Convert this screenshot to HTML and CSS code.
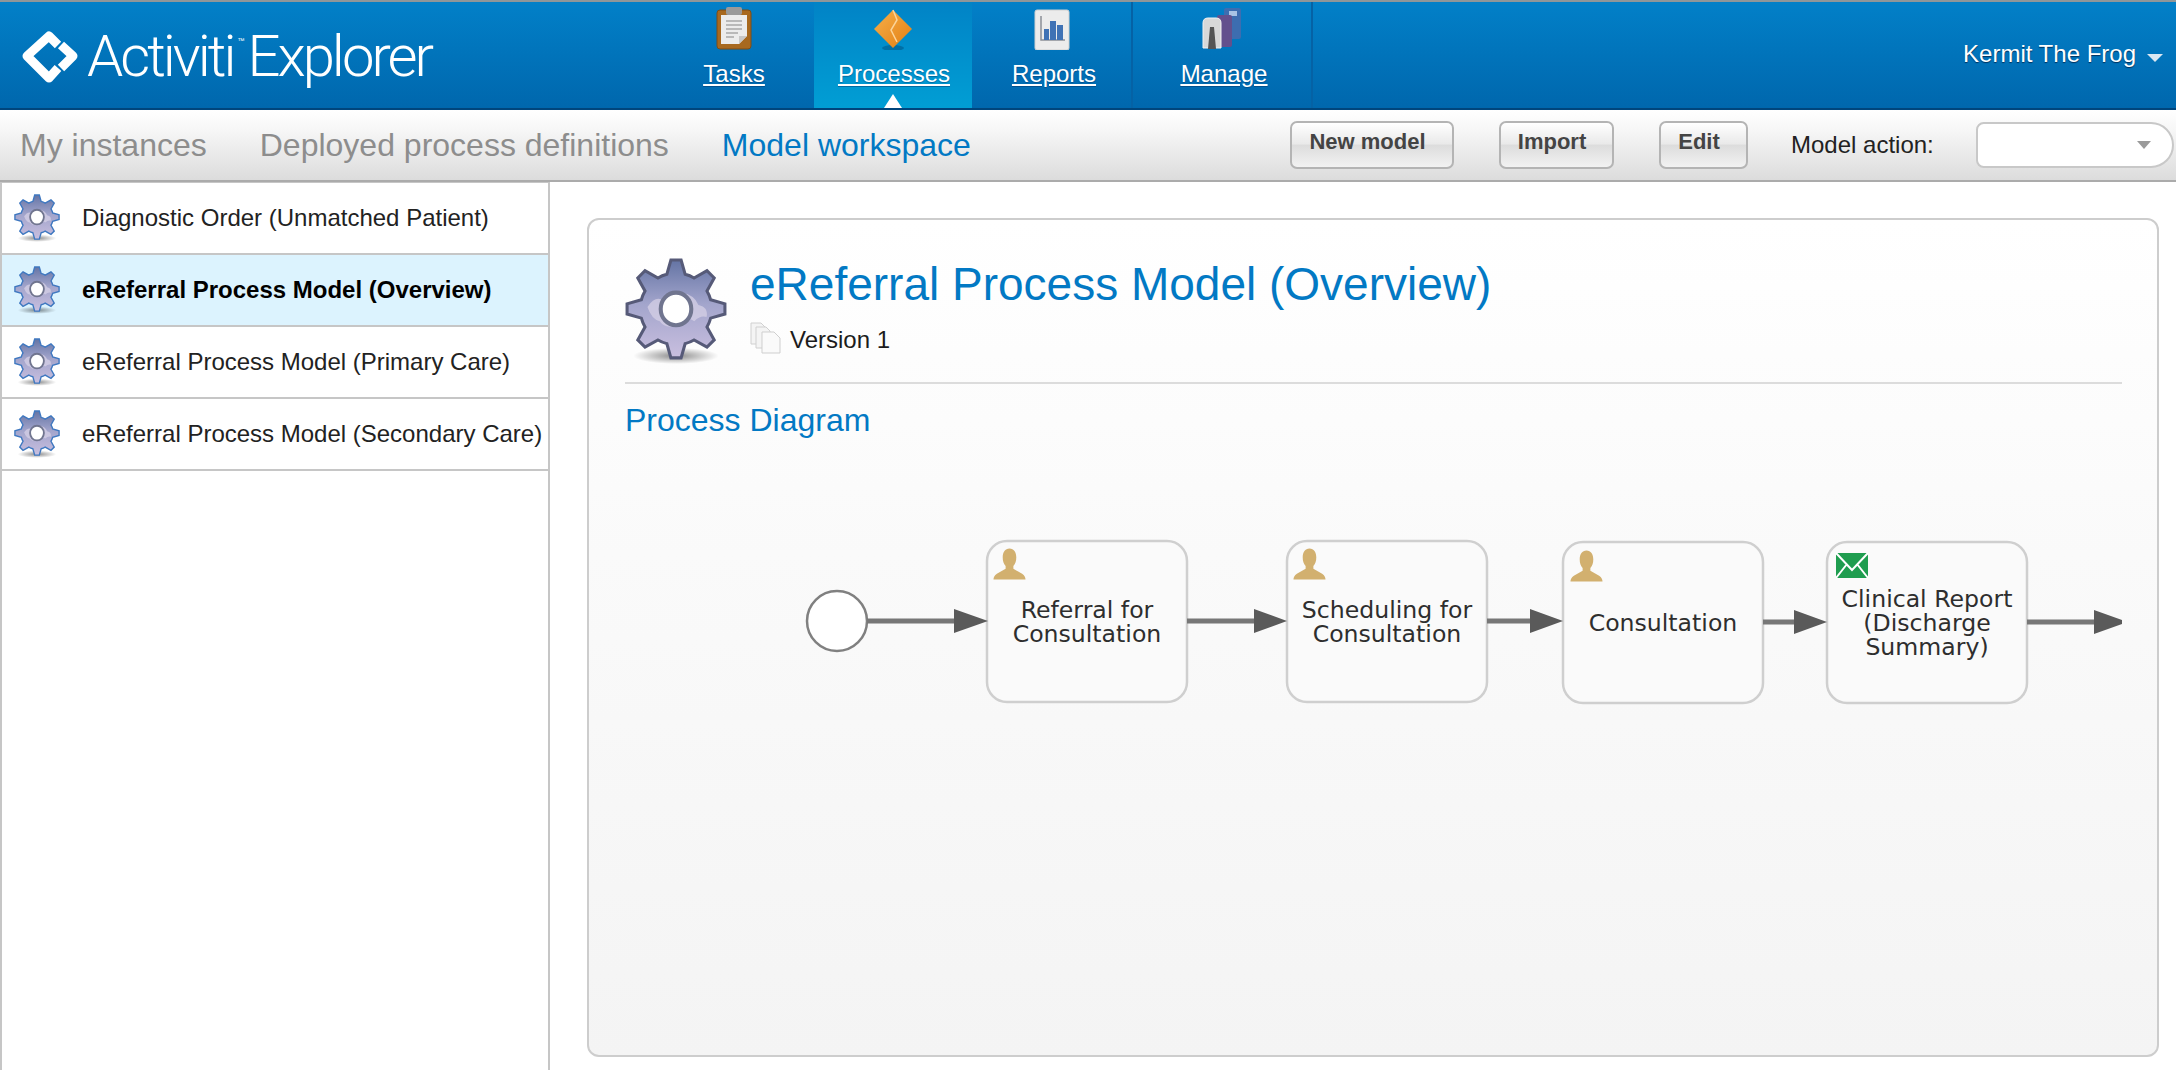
FILE: index.html
```html
<!DOCTYPE html>
<html lang="en">
<head>
<meta charset="utf-8">
<title>Activiti Explorer</title>
<link rel="stylesheet" href="styles.css">
</head>
<body>
<svg class="defs" width="0" height="0" aria-hidden="true">
  <defs>
    <linearGradient id="gearFill" x1="0" y1="0" x2="0" y2="1">
      <stop offset="0" stop-color="#6474a4"/>
      <stop offset=".45" stop-color="#a3a5cc"/>
      <stop offset="1" stop-color="#c9bfdf"/>
    </linearGradient>
    <radialGradient id="gearShadow" cx=".5" cy=".5" r=".5">
      <stop offset="0" stop-color="#000" stop-opacity=".45"/>
      <stop offset="1" stop-color="#000" stop-opacity="0"/>
    </radialGradient>
    <linearGradient id="diamondFill" x1="0" y1="0" x2="1" y2="1">
      <stop offset="0" stop-color="#f6b04a"/>
      <stop offset="1" stop-color="#e37f14"/>
    </linearGradient>
    <symbol id="gear" viewBox="0 0 100 104">
      <ellipse cx="50" cy="96" rx="42" ry="8" fill="url(#gearShadow)"/>
      <path class="gear-body" fill="url(#gearFill)" d="M41 16L45 2H55L59 16A35 35 0 0 1 67.68 19.6L80.4 12.52L87.48 19.6L80.4 32.32A35 35 0 0 1 84 41L98 45V55L84 59A35 35 0 0 1 80.4 67.68L87.48 80.4L80.4 87.48L67.68 80.4A35 35 0 0 1 59 84L55 98H45L41 84A35 35 0 0 1 32.32 80.4L19.6 87.48L12.52 80.4L19.6 67.68A35 35 0 0 1 16 59L2 55V45L16 41A35 35 0 0 1 19.6 32.32L12.52 19.6L19.6 12.52L32.32 19.6A35 35 0 0 1 41 16Z"/>
      <path fill="#d6d0e6" opacity=".75" d="M22 48Q30 36 38 42Q44 30 56 34Q68 36 72 46Q82 48 80 58Q74 56 68 62Q60 56 50 66Q40 70 34 62Q26 60 22 48Z"/>
      <ellipse cx="50" cy="50" rx="15" ry="16" fill="#fff" stroke="#70758f" stroke-width="4"/>
    </symbol>
    <symbol id="person" viewBox="0 0 34 34">
      <path fill="#d2b06f" d="M17 1c4.500 0 7 4 7 9 0 4-1 7-3 9v3l9 5c2.500 1.500 3.500 4 3.500 6H.5c0-2 1-4.500 3.500-6l9-5v-3c-2-2-3-5-3-9 0-5 2.500-9 7-9z"/>
    </symbol>
  </defs>
</svg>

<header class="topbar">
  <div class="logo">
    <svg class="logo-mark" viewBox="0 0 60 60" width="60" height="60" aria-hidden="true">
      <path d="M38 19L29 10L7 30L29 52L38 42" fill="none" stroke="#fff" stroke-width="9" stroke-linejoin="round" stroke-linecap="butt"/>
      <path d="M41 19L53 30L41 42" fill="none" stroke="#fff" stroke-width="9" stroke-linejoin="round"/>
    </svg>
    <span class="logo-text">Activiti</span><span class="logo-tm">™</span><span class="logo-text">Explorer</span>
  </div>
  <nav class="mainnav">
    <a class="navitem nav-tasks" href="#">
      <svg class="navicon" viewBox="0 0 36 44" width="36" height="44" aria-hidden="true">
        <rect x="1" y="4" width="34" height="39" rx="3" fill="#a8691f" stroke="#7d4d16"/>
        <path d="M5 9H31V30L23 38H5Z" fill="#ececec"/>
        <path d="M23 38V30H31Z" fill="#c8c8c8"/>
        <rect x="10" y="1" width="16" height="8" rx="2" fill="#9a9a9a"/>
        <path d="M10 15H26M10 19H26M10 23H26M10 27H22M10 31H18" stroke="#a8a8a8" stroke-width="1.500"/>
      </svg>
      <span class="navlabel">Tasks</span>
    </a>
    <a class="navitem nav-active nav-processes" href="#">
      <svg class="navicon" viewBox="0 0 40 44" width="40" height="44" aria-hidden="true">
        <ellipse cx="20" cy="42" rx="11" ry="3" fill="#00507f" opacity=".5"/>
        <path d="M20 4L39 23L20 42L1 23Z" fill="url(#diamondFill)"/>
        <path d="M20 4L24 14L18 24L24 36" fill="none" stroke="#fbd49a" stroke-width="1.500"/>
      </svg>
      <span class="navlabel">Processes</span>
      <span class="nav-caret"></span>
    </a>
    <a class="navitem nav-reports" href="#">
      <svg class="navicon" viewBox="0 0 36 44" width="36" height="44" aria-hidden="true">
        <rect x="1" y="4" width="34" height="40" rx="2" fill="#ececec" stroke="#d0d0d0"/>
        <path d="M7 10V34H31" fill="none" stroke="#8a8f96" stroke-width="1.500"/>
        <rect x="10" y="23" width="5" height="11" fill="#3f72b5"/>
        <rect x="16" y="15" width="6" height="19" fill="#3f72b5"/>
        <rect x="23" y="19" width="6" height="15" fill="#3f72b5"/>
      </svg>
      <span class="navlabel">Reports</span>
    </a>
    <a class="navitem nav-manage" href="#">
      <svg class="navicon" viewBox="0 0 40 44" width="40" height="44" aria-hidden="true">
        <rect x="22" y="2" width="17" height="31" rx="2" fill="#3d6db0"/>
        <rect x="27" y="5" width="8" height="5" fill="#a9c3e4"/>
        <rect x="15" y="9" width="15" height="32" rx="2" fill="#63508d"/>
        <path d="M1 17Q1 12 6 12H14Q19 12 19 17V42H1Z" fill="#d8d8d8" stroke="#f2f2f2"/>
        <path d="M8 21H12L14 43H6Z" fill="#555"/>
      </svg>
      <span class="navlabel">Manage</span>
    </a>
  </nav>
  <div class="user">Kermit The Frog<span class="user-caret"></span></div>
</header>

<div class="subbar">
  <a class="tab" href="#">My instances</a>
  <a class="tab" href="#">Deployed process definitions</a>
  <a class="tab tab-active" href="#">Model workspace</a>
  <div class="actions">
    <button class="btn btn-new" type="button">New model</button>
    <button class="btn btn-import" type="button">Import</button>
    <button class="btn btn-edit" type="button">Edit</button>
    <span class="action-label">Model action:</span>
    <div class="select"><span class="select-caret"></span></div>
  </div>
</div>

<div class="workspace">
  <aside class="sidebar">
    <div class="row"><svg class="row-gear" aria-hidden="true"><use href="#gear"/></svg><span>Diagnostic Order (Unmatched Patient)</span></div>
    <div class="row row-selected"><svg class="row-gear" aria-hidden="true"><use href="#gear"/></svg><span>eReferral Process Model (Overview)</span></div>
    <div class="row"><svg class="row-gear" aria-hidden="true"><use href="#gear"/></svg><span>eReferral Process Model (Primary Care)</span></div>
    <div class="row"><svg class="row-gear" aria-hidden="true"><use href="#gear"/></svg><span>eReferral Process Model (Secondary Care)</span></div>
  </aside>

  <main class="main">
    <section class="card">
      <div class="card-head">
        <svg class="head-gear" aria-hidden="true"><use href="#gear"/></svg>
        <div class="head-text">
          <h1 class="title">eReferral Process Model (Overview)</h1>
          <div class="version">
            <svg class="version-icon" viewBox="0 0 32 32" width="32" height="32" aria-hidden="true">
              <path d="M1 1H11L15 5V22H1Z" fill="#f4f4f4" stroke="#d0d0d0"/>
              <path d="M6 5H16L20 9V26H6Z" fill="#f4f4f4" stroke="#d0d0d0"/>
              <path d="M12 10H24L30 16V31H12Z" fill="#fafafa" stroke="#cfcfcf"/>
            </svg>
            <span class="version-text">Version 1</span>
          </div>
        </div>
      </div>
      <h2 class="section">Process Diagram</h2>
      <svg class="diagram" viewBox="625 440 1497 600" width="1497" height="600" role="img" aria-label="Process diagram">
        <circle class="start" cx="837" cy="621" r="30"/>
        <rect class="task" x="987" y="541" width="200" height="161" rx="20"/>
        <rect class="task" x="1287" y="541" width="200" height="161" rx="20"/>
        <rect class="task" x="1563" y="542" width="200" height="161" rx="20"/>
        <rect class="task" x="1827" y="542" width="200" height="161" rx="20"/>

        <path class="flow" d="M867 621H958M1187 621H1256M1487 621H1532M1763 622H1796M2027 622H2096"/>
        <path class="head" d="M954 609L988 621L954 633ZM1254 609L1287 621L1254 633ZM1530 609L1563 621L1530 633ZM1794 610L1827 622L1794 634ZM2094 610L2122 620V624L2094 634Z"/>

        <use href="#person" x="993" y="547" width="33" height="34"/>
        <use href="#person" x="1293" y="547" width="33" height="34"/>
        <use href="#person" x="1570" y="549" width="33" height="34"/>
        <rect class="mail" x="1836" y="553" width="32" height="25"/>
        <path class="mail-line" d="M1836 553L1852 570L1868 553M1836 578L1847 564M1868 578L1857 564"/>

        <text class="tasktext" x="1087" y="618">Referral for</text>
        <text class="tasktext" x="1087" y="642">Consultation</text>
        <text class="tasktext" x="1387" y="618">Scheduling for</text>
        <text class="tasktext" x="1387" y="642">Consultation</text>
        <text class="tasktext" x="1663" y="631">Consultation</text>
        <text class="tasktext" x="1927" y="607">Clinical Report</text>
        <text class="tasktext" x="1927" y="631">(Discharge</text>
        <text class="tasktext" x="1927" y="655">Summary)</text>
      </svg>
    </section>
  </main>
</div>
</body>
</html>
```

FILE: styles.css
```css
* { box-sizing: border-box; }
html, body { margin: 0; height: 100%; overflow: hidden; }
body {
  display: flex;
  flex-direction: column;
  font-family: "Liberation Sans", Arial, sans-serif;
  background: #fff;
  color: #1c1c1c;
}
.defs { position: absolute; }

/* top bar */
.topbar {
  flex: none;
  height: 110px;
  display: flex;
  border-top: 2px solid #8f9699;
  border-bottom: 2px solid #00457c;
  background: linear-gradient(#0280c8, #0067ad);
  color: #fff;
}
.logo {
  width: 654px;
  flex: none;
  display: flex;
  align-items: flex-start;
  padding: 24px 0 0 20px;
}
.logo-mark { flex: none; margin-right: 7px; }
.logo-text {
  font-family: Roboto, "Liberation Sans", sans-serif;
  font-weight: 300;
  font-size: 58px;
  line-height: 60px;
  letter-spacing: -3px;
}
.logo-tm { font-size: 7px; line-height: 30px; margin: 0 3px 0 4px; }
.mainnav { display: flex; height: 106px; }
.navitem {
  position: relative;
  display: flex;
  flex-direction: column;
  align-items: center;
  padding-top: 4px;
  color: #fff;
  font-size: 24px;
}
.navicon { display: block; flex: none; }
.navlabel { line-height: 28px; margin-top: 10px; text-decoration: underline; text-shadow: 0 1px 1px rgba(0, 40, 90, .4); }
.nav-tasks { width: 160px; }
.nav-processes { width: 158px; }
.nav-processes .navlabel { margin-left: 2px; }
.nav-reports { width: 161px; border-right: 2px solid #0562a5; }
.nav-reports .navlabel { margin-left: 5px; }
.nav-manage { width: 180px; border-right: 2px solid #0562a5; }
.nav-manage .navlabel { margin-left: 4px; }
.nav-active { background: linear-gradient(#0183c6, #019ed4); }
.nav-caret {
  position: absolute;
  left: 50%;
  bottom: 0;
  margin-left: -9px;
  border-left: 9px solid transparent;
  border-right: 9px solid transparent;
  border-bottom: 14px solid #fff;
}
.user {
  margin-left: auto;
  padding: 38px 13px 0 0;
  font-size: 24px;
  line-height: 28px;
  text-shadow: 0 1px 1px #00305c;
  display: flex;
  align-items: flex-start;
}
.user-caret {
  margin: 14px 0 0 11px;
  border-left: 8px solid transparent;
  border-right: 8px solid transparent;
  border-top: 8px solid #dbe8f2;
}

/* secondary bar */
.subbar {
  flex: none;
  height: 72px;
  display: flex;
  align-items: center;
  padding-left: 20px;
  border-bottom: 2px solid #ababab;
  background: linear-gradient(#fff, #f6f6f6 30%, #dcdcdc);
}
.tab {
  font-size: 32px;
  line-height: 40px;
  color: #8d8d8d;
  text-decoration: none;
  margin-right: 53px;
}
.tab-active { color: #0279c4; margin-right: 0; }
.actions { margin-left: auto; display: flex; align-items: center; padding-right: 2px; }
.btn {
  height: 48px;
  padding: 0 9px 6px 0;
  font: bold 22px/24px "Liberation Sans", Arial, sans-serif;
  color: #444;
  border: 2px solid #b4b4b4;
  border-radius: 7px;
  background: linear-gradient(#fff, #e9e9e9 48%, #dcdcdc 50%, #f2f2f2);
}
.btn-new { width: 164px; margin-right: 45px; }
.btn-import { width: 115px; margin-right: 45px; }
.btn-edit { width: 89px; margin-right: 43px; }
.action-label { font-size: 24px; color: #222; width: 185px; }
.select {
  width: 198px;
  height: 46px;
  display: flex;
  align-items: center;
  justify-content: flex-end;
  padding-right: 21px;
  border: 2px solid #c8c8c8;
  border-radius: 8px 24px 24px 8px;
  background: #fff;
}
.select-caret {
  border-left: 7px solid transparent;
  border-right: 7px solid transparent;
  border-top: 8px solid #9a9a9a;
}

/* workspace */
.workspace { flex: 1; min-height: 0; display: flex; }
.sidebar {
  flex: none;
  width: 550px;
  border-top: 1px solid #c6c6c6;
  border-left: 2px solid #c6c6c6;
  border-right: 2px solid #c6c6c6;
}
.row {
  height: 72px;
  display: flex;
  align-items: center;
  padding-left: 12px;
  font-size: 24px;
  color: #222;
  border-bottom: 2px solid #c6c6c6;
}
.row span { white-space: nowrap; }
.row-gear { width: 46px; height: 48px; flex: none; margin-right: 22px; --gear-stroke: #3f78c0; }
.row-selected { background: #dcf3fe; font-weight: bold; color: #000; }
.gear-body { stroke: var(--gear-stroke, #565a78); stroke-width: 3; }

.main { flex: 1; min-width: 0; padding: 36px 17px 13px 37px; }
.card {
  height: 100%;
  padding: 0 35px 0 36px;
  overflow: hidden;
  border: 2px solid #cdcdcd;
  border-radius: 12px;
  background: linear-gradient(#fff, #fafafa 40%, #f4f4f4);
}
.card-head {
  display: flex;
  height: 164px;
  padding-top: 38px;
  border-bottom: 2px solid #dcdcdc;
}
.head-gear { width: 102px; height: 106px; flex: none; margin-right: 23px; }
.title {
  margin: 0;
  font-weight: normal;
  font-size: 46px;
  line-height: 52px;
  color: #0279c4;
}
.version {
  display: flex;
  align-items: center;
  margin-top: 12px;
  font-size: 24px;
  color: #1c1c1c;
}
.version-icon { flex: none; margin-right: 8px; }
.version-text { margin-top: 4px; }
.section {
  margin: 16px 0 0;
  font-weight: normal;
  font-size: 32px;
  line-height: 40px;
  color: #0279c4;
}
.diagram { display: block; }
.start { fill: #fff; stroke: #808080; stroke-width: 2.500; }
.task { fill: #fafafa; stroke: #cfcfcf; stroke-width: 2.500; }
.flow { fill: none; stroke: #777; stroke-width: 5; }
.head { fill: #5a5a5a; }
.mail { fill: #1f9d4f; }
.mail-line { fill: none; stroke: #fff; stroke-width: 2; }
.tasktext {
  font-family: "DejaVu Sans", sans-serif;
  font-size: 23.6px;
  fill: #2e2e2e;
  text-anchor: middle;
}
```
